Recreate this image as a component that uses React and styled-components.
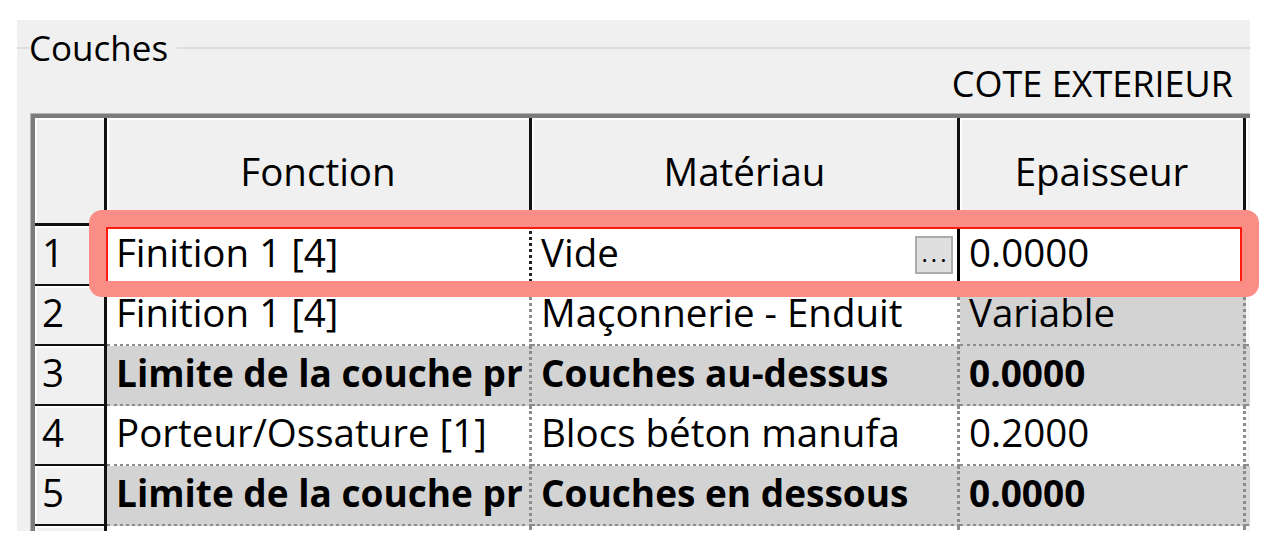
import React from 'react'
import styled, { createGlobalStyle } from 'styled-components'

const GlobalStyle = createGlobalStyle`
  body {
    margin: 0;
    background: #fff;
    font-family: "Open Sans", "Noto Sans", sans-serif;
    color: #000;
  }
`

const columns = '72px 425px 428px 286px 80px'

const rows = [
  { n: 1, cells: [{ t: 'Finition 1 [4]', edge: true }, { t: 'Vide', browse: true, edit: true }, { t: '0.0000' }] },
  { n: 2, cells: [{ t: 'Finition 1 [4]' }, { t: 'Maçonnerie - Enduit' }, { t: 'Variable', shade: true }] },
  { n: 3, bold: true, cells: [{ t: 'Limite de la couche pr', shade: true }, { t: 'Couches au-dessus', shade: true }, { t: '0.0000', shade: true }] },
  { n: 4, cells: [{ t: 'Porteur/Ossature [1]' }, { t: 'Blocs béton manufa' }, { t: '0.2000' }] },
  { n: 5, bold: true, cells: [{ t: 'Limite de la couche pr', shade: true }, { t: 'Couches en dessous', shade: true }, { t: '0.0000', shade: true }] },
  { n: '', cells: [{ t: '' }, { t: '' }, { t: '' }] },
]

const Page = styled.div`
  position: relative;
  height: 544px;
  box-sizing: border-box;
  padding: 20px 0 0 17px;
  overflow: hidden;
`

const Panel = styled.div`
  width: 1233px;
  height: 511px;
  background: #f0f0f0;
  overflow: hidden;
  display: flex;
  flex-direction: column;
`

const LegendRow = styled.div`
  display: flex;
  align-items: center;
  height: 56px;
  flex-shrink: 0;
`

const LegendLine = styled.span`
  height: 2px;
  background: #dcdcdc;
  width: ${p => (p.$grow ? 'auto' : '12px')};
  flex: ${p => (p.$grow ? '1' : 'none')};
`

const LegendText = styled.span`
  font-size: 35px;
  line-height: 48px;
  padding-right: 9px;
`

const SideLabel = styled.div`
  height: 38px;
  flex-shrink: 0;
  line-height: 16px;
  font-size: 36px;
  text-align: right;
  padding-right: 17px;
`

const Table = styled.div`
  margin-left: 14px;
  border-top: 4px solid #7c7c7c;
  border-left: 4px solid #7c7c7c;
  box-shadow: -1px -1px 0 #b4b4b4;
  width: max-content;
`

const Row = styled.div`
  display: grid;
  grid-template-columns: ${columns};
  height: ${p => (p.$header ? '108px' : '60px')};
`

const HeadCell = styled.div`
  box-sizing: border-box;
  background: #f0f0f0;
  border-right: ${p => (p.$open ? 'none' : '3px solid #111')};
  border-bottom: ${p => (p.$open ? 'none' : '3px solid #111')};
  box-shadow: inset 2px 2px 0 #fff;
  display: flex;
  align-items: center;
  justify-content: center;
  font-size: 38.5px;
`

const RowNumber = styled.div`
  box-sizing: border-box;
  background: #f0f0f0;
  border-right: 3px solid #111;
  border-bottom: 3px solid #111;
  box-shadow: inset 2px 2px 0 #fff;
  display: flex;
  align-items: center;
  padding: 0 0 6px 7px;
  font-size: 38.5px;
`

const Cell = styled.div`
  box-sizing: border-box;
  background: ${p => (p.$shade ? '#d3d3d3' : '#fff')};
  border-right: ${p =>
    p.$edit ? '3px solid #000' : p.$edge ? '3px dotted #222' : '3px dotted #8c8c8c'};
  border-bottom: 3px dotted #8c8c8c;
  display: flex;
  align-items: center;
  justify-content: space-between;
  padding: 0 4px 6px 9px;
  overflow: hidden;
  white-space: nowrap;
  font-size: ${p => (p.$bold ? '37px' : '38.5px')};
  font-weight: ${p => (p.$bold ? 700 : 400)};
`

const Filler = styled.div`
  background: ${p => (p.$shade ? '#d3d3d3' : '#f7f7f7')};
  border-bottom: 3px dotted #8c8c8c;
`

const BrowseButton = styled.span`
  box-sizing: border-box;
  width: 38px;
  height: 38px;
  margin-top: 6px;
  background: #dfdfdf;
  border: 2px solid #acacac;
  display: flex;
  justify-content: center;
  font-size: 24px;
  line-height: 26px;
  padding-top: 2px;
  letter-spacing: 3px;
  text-indent: 3px;
`

const Highlight = styled.div`
  position: absolute;
  left: 89px;
  top: 210px;
  width: 1170px;
  height: 87px;
  box-sizing: border-box;
  border: 17px solid #fa8e86;
  border-bottom-width: 16px;
  border-radius: 13px;
  pointer-events: none;

  &::after {
    content: '';
    position: absolute;
    inset: 0;
    border: 2px solid #ff1a10;
    border-bottom: none;
  }
`

const App = () => (
  <Page>
    <GlobalStyle />
    <Panel>
      <LegendRow>
        <LegendLine />
        <LegendText>Couches</LegendText>
        <LegendLine $grow />
      </LegendRow>
      <SideLabel>COTE EXTERIEUR</SideLabel>
      <Table>
        <Row $header>
          <HeadCell />
          <HeadCell>Fonction</HeadCell>
          <HeadCell>Matériau</HeadCell>
          <HeadCell>Epaisseur</HeadCell>
          <HeadCell $open />
        </Row>
        {rows.map((row, i) => (
          <Row key={i}>
            <RowNumber>{row.n}</RowNumber>
            {row.cells.map((c, j) => (
              <Cell key={j} $shade={c.shade} $bold={row.bold} $edit={c.edit} $edge={c.edge}>
                <span>{c.t}</span>
                {c.browse && <BrowseButton>...</BrowseButton>}
              </Cell>
            ))}
            <Filler $shade={row.bold} />
          </Row>
        ))}
      </Table>
    </Panel>
    <Highlight />
  </Page>
)

export default App
